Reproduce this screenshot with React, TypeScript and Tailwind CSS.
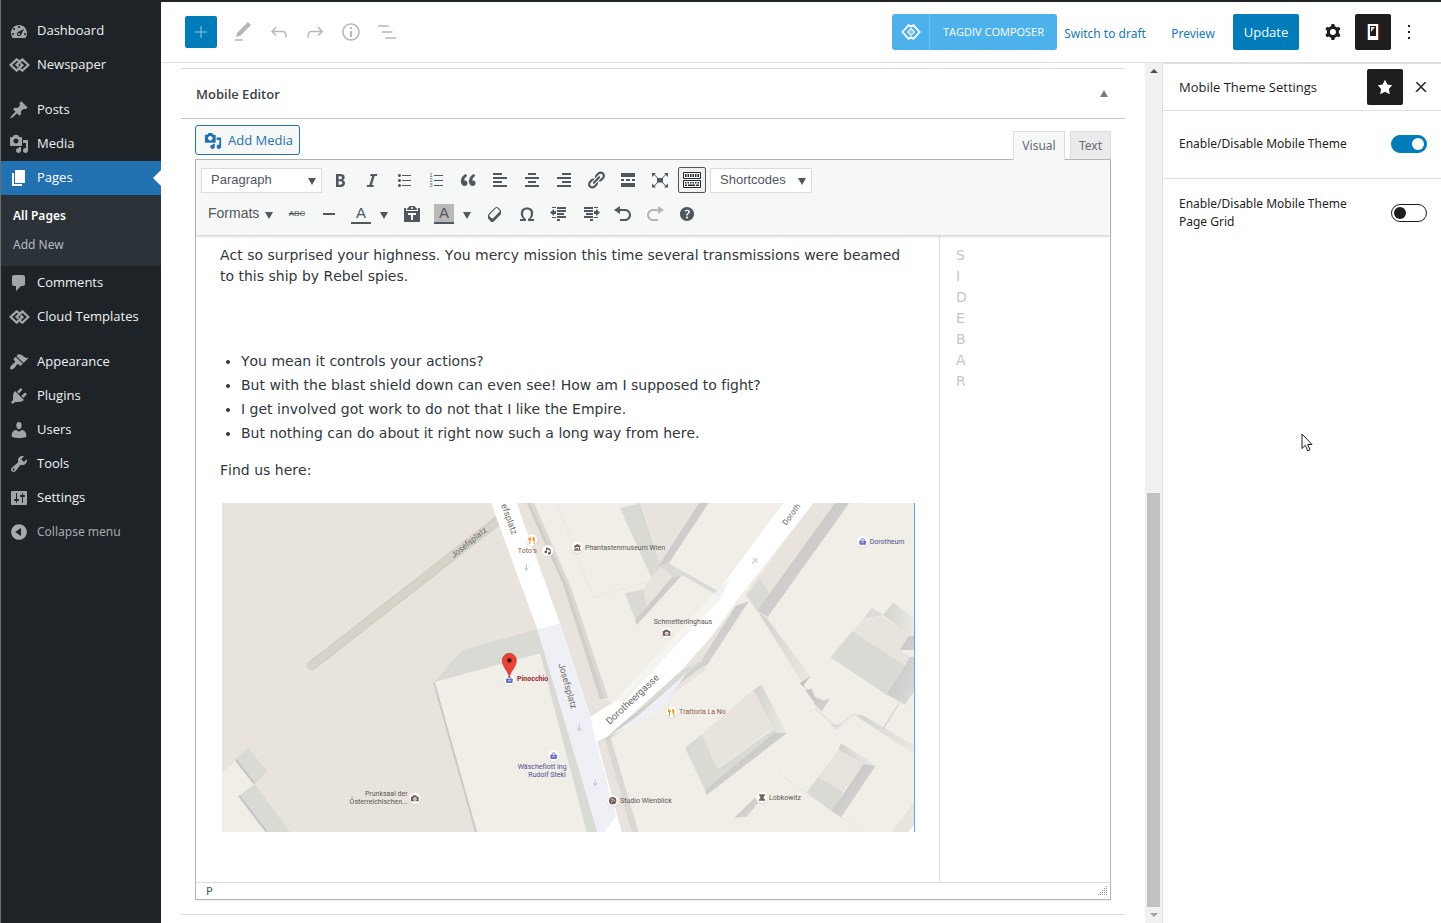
import React from 'react';

const paths = {
  dashboard: 'M3.76 17.01h12.48C17.34 15.63 18 13.9 18 12c0-4.41-3.58-8-8-8s-8 3.59-8 8c0 1.9.66 3.63 1.76 5.01zM9 6c0-.55.45-1 1-1s1 .45 1 1-.45 1-1 1-1-.45-1-1zM4 8c0-.55.45-1 1-1s1 .45 1 1-.45 1-1 1-1-.45-1-1zm4.52 3.4c.84-.83 6.51-3.5 6.51-3.5s-2.66 5.68-3.49 6.51c-.84.84-2.18.84-3.02 0-.83-.83-.83-2.18 0-3.01zM3 13c0-.55.45-1 1-1s1 .45 1 1-.45 1-1 1-1-.45-1-1zm6 0c0 .55.45 1 1 1s1-.45 1-1-.45-1-1-1-1 .45-1 1zm6 0c0-.55.45-1 1-1s1 .45 1 1-.45 1-1 1-1-.45-1-1z',
  post: 'M10.44 3.02l1.82-1.82 6.36 6.35-1.83 1.82c-1.05-.68-2.48-.57-3.41.36l-.75.75c-.92.93-1.04 2.35-.35 3.41l-1.83 1.82-2.41-2.41-2.8 2.79c-.42.42-3.38 2.71-3.8 2.29s1.86-3.39 2.28-3.81l2.79-2.79L4.1 9.36l1.83-1.82c1.05.69 2.48.57 3.4-.36l.75-.75c.93-.92 1.05-2.35.36-3.41z',
  media: 'M13 11V4c0-.55-.45-1-1-1h-1.67L9 1H5L3.67 3H2c-.55 0-1 .45-1 1v7c0 .55.45 1 1 1h10c.55 0 1-.45 1-1zM7 4.5c1.38 0 2.5 1.12 2.5 2.5S8.38 9.5 7 9.5 4.5 8.38 4.5 7 5.62 4.5 7 4.5zM14 6h5v10.5c0 1.38-1.12 2.5-2.5 2.5S14 17.88 14 16.5s1.12-2.5 2.5-2.5c.17 0 .34.02.5.05V9h-3V6zm-4 8.05V13h2v3.5c0 1.38-1.12 2.5-2.5 2.5S7 17.88 7 16.5 8.12 14 9.5 14c.17 0 .34.02.5.05z',
  page: 'M6 15V2h10v13H6zm-1 1h8v2H3V5h2v11z',
  comments: 'M5 2h9c1.1 0 2 .9 2 2v7c0 1.1-.9 2-2 2h-2l-5 5v-5H5c-1.1 0-2-.9-2-2V4c0-1.1.9-2 2-2z',
  appearance: 'M14.48 11.06L7.41 3.99l1.5-1.5c.5-.56 2.3-.47 3.51.32 1.21.8 1.43 1.28 2.91 2.1 1.18.64 2.45 1.26 4.45.85zm-.71.71L6.7 4.7 4.93 6.47c-.39.39-.39 1.02 0 1.41l1.06 1.06c.39.39.39 1.03 0 1.42-.6.6-1.43 1.11-2.21 1.69-.35.26-.7.53-1.01.84C1.43 14.23.4 16.08 1.4 17.07c.99 1 2.84-.03 4.18-1.36.31-.31.58-.66.85-1.02.57-.78 1.08-1.61 1.69-2.21.39-.39 1.02-.39 1.41 0l1.06 1.06c.39.39 1.02.39 1.41 0z',
  plugins: 'M13.11 4.36L9.87 7.6 8 5.73l3.24-3.24c.35-.34 1.05-.2 1.56.32.52.51.66 1.21.31 1.55zm-8 1.77l.91-1.12 9.01 9.01-1.19.84c-.71.71-2.63 1.16-3.82 1.16H6.14L4.9 17.26c-.59.59-1.54.59-2.12 0-.59-.58-.59-1.53 0-2.12l1.24-1.24v-3.88c0-1.13.4-3.19 1.09-3.89zm7.26 3.97l3.24-3.24c.34-.35 1.04-.21 1.55.31.52.51.66 1.21.31 1.55l-3.24 3.25z',
  users: 'M10 9.25c-2.27 0-2.73-3.44-2.73-3.44C7 4.02 7.82 2 9.97 2c2.16 0 2.98 2.02 2.71 3.81 0 0-.41 3.44-2.68 3.44zm0 2.57L12.72 10c2.39 0 4.52 2.33 4.52 4.53v2.49s-3.65 1.13-7.24 1.13c-3.65 0-7.24-1.13-7.24-1.13v-2.49c0-2.25 1.94-4.48 4.47-4.48z',
  tools: 'M16.68 9.77c-1.34 1.34-3.3 1.67-4.95.99l-5.41 6.52c-.99.99-2.59.99-3.58 0s-.99-2.59 0-3.57l6.52-5.42c-.68-1.65-.35-3.61.99-4.95 1.28-1.28 3.12-1.62 4.72-1.06l-2.89 2.89 2.82 2.82 2.86-2.87c.53 1.58.18 3.39-1.08 4.65zM3.81 16.21c.4.39 1.04.39 1.43 0 .4-.4.4-1.04 0-1.43-.39-.4-1.03-.4-1.43 0-.39.39-.39 1.03 0 1.43z',
  settings: 'M18 16V4c0-.55-.45-1-1-1H3c-.55 0-1 .45-1 1v12c0 .55.45 1 1 1h14c.55 0 1-.45 1-1zM8 11h1c.55 0 1 .45 1 1s-.45 1-1 1H8v1.5c0 .28-.22.5-.5.5s-.5-.22-.5-.5V13H6c-.55 0-1-.45-1-1s.45-1 1-1h1V5.5c0-.28.22-.5.5-.5s.5.22.5.5V11zm5-2h-1c-.55 0-1-.45-1-1s.45-1 1-1h1V5.5c0-.28.22-.5.5-.5s.5.22.5.5V7h1c.55 0 1 .45 1 1s-.45 1-1 1h-1v5.5c0 .28-.22.5-.5.5s-.5-.22-.5-.5V9z',
  collapse: 'M10 2.16c4.33 0 7.84 3.51 7.84 7.84s-3.51 7.84-7.84 7.84S2.16 14.33 2.16 10 5.71 2.16 10 2.16zm2 11.72V6.12L6.18 9.97z',
  star: 'M10 1l3 6 6 .75-4.12 4.62L16 19l-6-3-6 3 1.13-6.63L1 7.75 7 7z',
  bold: 'M6 4v13h4.54c1.37 0 2.46-.33 3.26-1 .8-.66 1.2-1.58 1.2-2.77 0-.84-.17-1.51-.51-2.01s-.9-.85-1.67-1.03v-.09c.57-.1 1.02-.4 1.36-.9s.51-1.13.51-1.91c0-1.14-.39-1.98-1.17-2.5C12.75 4.26 11.5 4 9.78 4H6zm2.57 5.15V6.26h1.36c.73 0 1.27.11 1.61.32.34.22.51.58.51 1.07 0 .54-.16.92-.47 1.15s-.82.35-1.51.35h-1.5zm0 2.19h1.6c1.44 0 2.16.53 2.16 1.61 0 .6-.17 1.05-.51 1.34s-.86.43-1.57.43H8.57v-3.38z',
  italic: 'M14.78 6h-2.13l-2.8 9h2.12l-.62 2H4.6l.62-2h2.14l2.8-9H8.03l.62-2h6.75z',
  ul: 'M5.5 7C4.67 7 4 6.33 4 5.5 4 4.68 4.67 4 5.5 4 6.32 4 7 4.68 7 5.5 7 6.33 6.32 7 5.5 7zM8 5h9v1H8V5zm-2.5 7c-.83 0-1.5-.67-1.5-1.5C4 9.68 4.67 9 5.5 9c.82 0 1.5.68 1.5 1.5 0 .83-.68 1.5-1.5 1.5zM8 10h9v1H8v-1zm-2.5 7c-.83 0-1.5-.67-1.5-1.5 0-.82.67-1.5 1.5-1.5.82 0 1.5.68 1.5 1.5 0 .83-.68 1.5-1.5 1.5zM8 15h9v1H8v-1z',
  quote: 'M9.49 13.22c0-.74-.2-1.38-.61-1.9-.62-.78-1.83-.88-2.53-.72-.29-1.65 1.11-3.75 2.92-4.65L7.88 4c-2.73 1.3-5.42 4.28-4.96 8.05C3.21 14.43 4.59 16 6.54 16c.85 0 1.56-.25 2.12-.75s.83-1.18.83-2.03zm8.05 0c0-.74-.2-1.38-.61-1.9-.63-.78-1.83-.88-2.53-.72-.29-1.65 1.11-3.75 2.92-4.65L15.93 4c-2.73 1.3-5.41 4.28-4.95 8.05.29 2.38 1.66 3.95 3.61 3.95.85 0 1.56-.25 2.12-.75s.83-1.18.83-2.03z',
  left: 'M12 5V3H3v2h9zm5 4V7H3v2h14zm-5 4v-2H3v2h9zm5 4v-2H3v2h14z',
  center: 'M14 5V3H6v2h8zm3 4V7H3v2h14zm-3 4v-2H6v2h8zm3 4v-2H3v2h14z',
  right: 'M17 5V3H8v2h9zm0 4V7H3v2h14zm0 4v-2H8v2h9zm0 4v-2H3v2h14z',
  link: 'M17.74 2.76c1.68 1.69 1.68 4.41 0 6.1l-1.53 1.52c-1.12 1.12-2.7 1.47-4.14 1.09l2.62-2.61.76-.77.76-.76c.84-.84.84-2.2 0-3.04-.84-.85-2.2-.85-3.04 0l-.77.76-3.38 3.38c-.37-1.44-.02-3.02 1.1-4.14l1.52-1.53c1.69-1.68 4.42-1.68 6.1 0zM8.59 13.43l5.34-5.34c.42-.42.42-1.1 0-1.52-.44-.43-1.13-.39-1.53 0l-5.33 5.34c-.42.42-.42 1.1 0 1.52.44.43 1.13.39 1.52 0zm-.76 2.29l4.14-4.15c.38 1.44.03 3.02-1.09 4.14l-1.52 1.53c-1.69 1.68-4.41 1.68-6.1 0-1.68-1.68-1.68-4.42 0-6.1l1.53-1.52c1.12-1.12 2.7-1.47 4.14-1.1l-4.14 4.15c-.85.84-.85 2.2 0 3.05.84.84 2.2.84 3.04 0z',
  more: 'M17 7V3H3v4h14zM6 11V9H3v2h3zm6 0V9H8v2h4zm5 0V9h-3v2h3zm0 6v-4H3v4h14z',
  hr: 'M4 9h12v2H4z',
  paste: 'M12.38 2L15 5v1H5V5l2.64-3h4.74zM10 5c.55 0 1-.44 1-1 0-.55-.45-1-1-1s-1 .45-1 1c0 .56.45 1 1 1zm5.45-1H17c.55 0 1 .45 1 1v12c0 .56-.45 1-1 1H3c-.55 0-1-.44-1-1V5c0-.55.45-1 1-1h1.55L4 4.63V7h12V4.63zM14 11V9H6v2h3v5h2v-5h3z',
  eraser: 'M14.29 4.59l1.1 1.11c.41.4.61.94.61 1.47v2.12c0 .53-.2 1.07-.61 1.47l-6.63 6.63c-.4.41-.94.61-1.47.61s-1.07-.2-1.47-.61l-1.11-1.1-1.1-1.11c-.41-.4-.61-.94-.61-1.47v-2.12c0-.54.2-1.07.61-1.48l6.63-6.62c.4-.41.94-.61 1.47-.61s1.06.2 1.47.61zm-6.21 9.7l6.42-6.42c.39-.39.39-1.03 0-1.43L12.36 4.3c-.19-.19-.45-.29-.72-.29s-.52.1-.71.29l-6.42 6.42c-.39.4-.39 1.04 0 1.43l2.14 2.14c.38.38 1.04.38 1.43 0z',
  omega: 'M10 5.4c1.27 0 2.24.36 2.91 1.08.66.71 1 1.76 1 3.13 0 1.28-.23 2.37-.69 3.27-.47.89-1.27 1.52-2.22 2.12v2h6v-2h-3.69c.92-.64 1.62-1.34 2.12-2.34.49-1.01.74-2.13.74-3.35 0-1.78-.55-3.19-1.65-4.22S11.92 3.54 10 3.54s-3.43.53-4.52 1.57c-1.1 1.04-1.65 2.44-1.65 4.2 0 1.21.24 2.31.73 3.33.48 1.01 1.19 1.71 2.1 2.36H3v2h6v-2c-.98-.64-1.8-1.28-2.24-2.17-.45-.89-.67-1.96-.67-3.22 0-1.37.33-2.41 1-3.13C7.75 5.76 8.72 5.4 10 5.4z',
  outdent: 'M7 4V3H3v1h4zm10 1V3H8v2h9zM7 7H5V5L1 8.5 5 12v-2h2V7zm10 1V6H8v2h9zm-2 3V9H8v2h7zm2 3v-2H8v2h9zM7 14v-1H3v1h4zm4 3v-2H8v2h3z',
  indent: 'M3 5V3h9v2H3zm10-1V3h4v1h-4zm0 3h2V5l4 3.5-4 3.5v-2h-2V7zM3 8V6h9v2H3zm2 3V9h7v2H5zm-2 3v-2h9v2H3zm10 0v-1h4v1h-4zm-4 3v-2h3v2H9z',
  undo: 'M12 5H7V2L1 6l6 4V7h5c2.2 0 4 1.8 4 4s-1.8 4-4 4H7v2h5c3.3 0 6-2.7 6-6s-2.7-6-6-6z',
  redo: 'M8 5h5V2l6 4-6 4V7H8c-2.2 0-4 1.8-4 4s1.8 4 4 4h5v2H8c-3.3 0-6-2.7-6-6s2.7-6 6-6z',
  help: 'M17 10c0-3.87-3.14-7-7-7-3.87 0-7 3.13-7 7s3.13 7 7 7c3.86 0 7-3.13 7-7zm-6.3 1.48H9.14v-.43c0-.38.08-.7.24-.98s.46-.57.88-.89c.41-.29.68-.53.81-.71.14-.18.2-.39.2-.62 0-.25-.09-.44-.28-.58-.19-.13-.45-.19-.79-.19-.58 0-1.25.19-2 .57l-.64-1.28c.87-.49 1.8-.74 2.77-.74.81 0 1.45.2 1.92.58.48.39.71.91.71 1.55 0 .43-.09.8-.29 1.11-.19.32-.57.67-1.11 1.06-.38.28-.61.49-.71.63-.1.15-.15.34-.15.57v.35zm-1.47 2.74c-.18-.17-.27-.42-.27-.73 0-.33.08-.58.26-.75s.43-.25.77-.25c.32 0 .57.09.75.26s.27.42.27.74c0 .3-.09.55-.27.72-.18.18-.43.27-.75.27-.33 0-.58-.09-.76-.26z',
};

type IconName = keyof typeof paths;

const Icon: React.FC<{ name: IconName; className?: string }> = ({ name, className = 'size-5' }) => (
  <svg viewBox="0 0 20 20" fill="currentColor" className={className} aria-hidden="true">
    <path d={paths[name]} />
  </svg>
);

const headerPaths = {
  edit: 'M20.1 5.1L16.9 2 6.2 12.7l-1.3 4.4 4.5-1.3L20.1 5.1zM4 20.8h8v-1.5H4v1.5z',
  undo: 'M18.3 11.7c-.6-.6-1.4-.9-2.3-.9H6.7l2.9-3.3-1.1-1-4.5 5L8.5 16l1-1-2.7-2.7H16c.5 0 .9.2 1.3.5 1 1 1 3.4 1 4.5v.3h1.5v-.2c0-1.5 0-4.3-1.5-5.7z',
  redo: 'M15.6 6.5l-1.1 1 2.9 3.3H8c-.9 0-1.7.3-2.3.9-1.4 1.5-1.4 4.2-1.4 5.6v.2h1.5v-.3c0-1.1 0-3.5 1-4.5.3-.3.7-.5 1.3-.5h9.2L14.5 15l1.1 1.1 4.6-4.6-4.6-5z',
  info: 'M12 3.2c-4.8 0-8.8 3.9-8.8 8.8 0 4.8 3.9 8.8 8.8 8.8 4.8 0 8.8-3.9 8.8-8.8 0-4.8-4-8.8-8.8-8.8zm0 16c-4 0-7.2-3.3-7.2-7.2C4.8 8 8 4.8 12 4.8s7.2 3.3 7.2 7.2c0 4-3.2 7.2-7.2 7.2zM11 17h2v-6h-2v6zm0-8h2V7h-2v2z',
  list: 'M13.8 5.2H3v1.5h10.8V5.2zm-3.6 12v1.5H21v-1.5H10.2zm7.2-6H6.6v1.5h10.8v-1.5z',
  plus: 'M18 11.2h-5.2V6h-1.6v5.2H6v1.6h5.2V18h1.6v-5.2H18z',
  cog: 'M10.289 4.836A1 1 0 0111.275 4h1.306a1 1 0 01.987.836l.244 1.466c.787.26 1.503.679 2.108 1.218l1.393-.522a1 1 0 011.216.437l.653 1.13a1 1 0 01-.23 1.273l-1.148.944a6.025 6.025 0 010 2.435l1.149.946a1 1 0 01.23 1.272l-.653 1.13a1 1 0 01-1.216.437l-1.394-.522c-.605.54-1.32.958-2.108 1.218l-.244 1.466a1 1 0 01-.987.836h-1.306a1 1 0 01-.986-.836l-.244-1.466a5.995 5.995 0 01-2.108-1.218l-1.394.522a1 1 0 01-1.217-.436l-.653-1.131a1 1 0 01.23-1.272l1.149-.946a6.026 6.026 0 010-2.435l-1.148-.944a1 1 0 01-.23-1.272l.653-1.131a1 1 0 011.217-.437l1.393.522a5.994 5.994 0 012.108-1.218l.244-1.466zM14.929 12a3 3 0 11-6 0 3 3 0 016 0z',
  dots: 'M13 19h-2v-2h2v2zm0-6h-2v-2h2v2zm0-6h-2V5h2v2z',
  close: 'M13 11.8l6.1-6.3-1-1-6.1 6.2-6.1-6.2-1 1 6.1 6.3-6.5 6.7 1 1 6.5-6.6 6.5 6.6 1-1z',
};

const HeaderIcon: React.FC<{ name: keyof typeof headerPaths; className?: string }> = ({ name, className = 'size-6' }) => (
  <svg viewBox="0 0 24 24" fill="currentColor" fillRule="evenodd" className={className} aria-hidden="true">
    <path d={headerPaths[name]} />
  </svg>
);

const TagdivLogo: React.FC = () => (
  <svg viewBox="0 0 21 14" className="h-[14px] w-[21px]" fill="none" stroke="currentColor" strokeWidth="2.3" aria-hidden="true">
    <path d="M10.8 3.6L7.6 1.4 1.6 7l6 5.6 5.8-5.4-1.9-1.8" />
    <path d="M10.2 10.4l3.2 2.2 6-5.6-6-5.6-5.8 5.4 1.9 1.8" />
  </svg>
);

type MenuEntry = { label: string; icon: IconName | 'tagdiv'; active?: boolean; gap?: boolean };

const menuTop: MenuEntry[] = [
  { label: 'Dashboard', icon: 'dashboard' },
  { label: 'Newspaper', icon: 'tagdiv' },
  { label: 'Posts', icon: 'post', gap: true },
  { label: 'Media', icon: 'media' },
  { label: 'Pages', icon: 'page', active: true },
];

const menuBottom: MenuEntry[] = [
  { label: 'Comments', icon: 'comments' },
  { label: 'Cloud Templates', icon: 'tagdiv' },
  { label: 'Appearance', icon: 'appearance', gap: true },
  { label: 'Plugins', icon: 'plugins' },
  { label: 'Users', icon: 'users' },
  { label: 'Tools', icon: 'tools' },
  { label: 'Settings', icon: 'settings' },
];

const MenuItem: React.FC<{ item: MenuEntry }> = ({ item }) => (
  <li className={item.gap ? 'mt-[11px]' : ''}>
    <a
      href="#"
      className={`relative flex h-[34px] items-center text-[13px] ${item.active ? 'bg-[#2271b1] text-white' : 'text-[#f0f0f1]'}`}
    >
      <span className={`flex w-9 justify-center ${item.active ? 'text-white' : 'text-[#a0a5aa]'}`}>
        {item.icon === 'tagdiv' ? <TagdivLogo /> : <Icon name={item.icon} className="size-5" />}
      </span>
      {item.label}
      {item.active && (
        <span className="absolute right-0 border-y-8 border-r-8 border-y-transparent border-r-white" />
      )}
    </a>
  </li>
);

const Sidebar: React.FC = () => (
  <nav className="w-[161px] shrink-0 border-l border-[#6b6e71] bg-[#1d2327] pt-[14px]">
    <ul>
      {menuTop.map((item) => (
        <MenuItem key={item.label} item={item} />
      ))}
    </ul>
    <ul className="bg-[#2c3338] py-[7px] text-xs font-['Noto_Sans',sans-serif]">
      <li>
        <a href="#" className="flex h-7 items-center pl-3 font-semibold text-white">All Pages</a>
      </li>
      <li>
        <a href="#" className="flex h-[29px] items-center pl-3 text-[#b4b9be]">Add New</a>
      </li>
    </ul>
    <ul>
      {menuBottom.map((item) => (
        <MenuItem key={item.label} item={item} />
      ))}
    </ul>
    <button type="button" className="flex h-[34px] items-center font-['Noto_Sans',sans-serif] text-xs text-[#a7aaad]">
      <span className="flex w-9 justify-center">
        <Icon name="collapse" />
      </span>
      Collapse menu
    </button>
  </nav>
);

const Header: React.FC = () => (
  <header className="flex h-[61px] shrink-0 items-center justify-between border-b border-[#e0e0e0] bg-white pr-[14px] pl-6">
    <div className="flex items-center text-[#b8b8b8]">
      <button type="button" aria-label="Add block" className="mr-2 flex size-8 items-center justify-center rounded-xs bg-[#007cba] text-[#66b0d6]">
        <HeaderIcon name="plus" />
      </button>
      {(['edit', 'undo', 'redo', 'info', 'list'] as const).map((name) => (
        <button key={name} type="button" aria-label={name} className="flex h-9 w-9 items-center justify-center">
          <HeaderIcon name={name} />
        </button>
      ))}
    </div>
    <div className="flex items-center font-['Noto_Sans',sans-serif] text-xs">
      <button type="button" className="flex h-9 items-center rounded-[3px] bg-[#4db2ec] text-white">
        <span className="flex h-full w-[38px] items-center justify-center border-r border-[#6dc1f0]">
          <svg viewBox="0 0 20 16" className="h-4 w-5" fill="none" stroke="currentColor" strokeWidth="1.8" aria-hidden="true">
            <path d="M1.400 8L7.600 1.200 10 2.600l2.400-1.400L18.600 8l-6.200 6.800-2.400-1.400-2.400 1.400z" />
            <path d="M10 4.800L13.200 8 10 11.200 6.800 8z" strokeWidth="1.3" />
            <circle cx="10" cy="8" r="0.700" fill="currentColor" stroke="none" />
          </svg>
        </span>
        <span className="w-[127px] text-center font-['Open_Sans',sans-serif] text-[11px]">TAGDIV COMPOSER</span>
      </button>
      <button type="button" className="h-9 w-24 pt-[3px] text-[#2079b4]">Switch to draft</button>
      <a href="#" className="w-20 pt-[3px] text-center text-[#2079b4]">Preview</a>
      <button type="button" className="h-9 w-[66px] rounded-xs bg-[#007cba] pt-[2px] font-['Open_Sans',sans-serif] text-[13px] text-white">Update</button>
      <button type="button" aria-label="Settings" className="ml-4 flex size-9 items-center justify-center text-[#1e1e1e]">
        <HeaderIcon name="cog" />
      </button>
      <button type="button" aria-label="Mobile theme" className="ml-1 flex size-9 items-center justify-center rounded-xs bg-[#1e1e1e]">
        <svg viewBox="0 0 12 16" className="h-4 w-3" aria-hidden="true">
          <rect width="12" height="16" fill="#fff" />
          <rect width="1" height="16" fill="#3558c8" />
          <rect x="11" width="1" height="16" fill="#d0312d" />
          <path d="M3 2h6v10H3z" fill="#1e1e1e" />
          <path d="M4 3h4L4 8z" fill="#e7e1ea" />
        </svg>
      </button>
      <button type="button" aria-label="Options" className="flex h-9 w-9 items-center justify-center text-[#1e1e1e]">
        <HeaderIcon name="dots" />
      </button>
    </div>
  </header>
);

const Caret: React.FC<{ className?: string }> = ({ className = '' }) => (
  <span className={`mt-[2px] border-x-4 border-t-[7px] border-x-transparent border-t-[#50575e] ${className}`} />
);

const ToolButton: React.FC<{ label: string; className?: string; children: React.ReactNode }> = ({ label, className = '', children }) => (
  <button type="button" aria-label={label} className={`flex h-[26px] w-7 items-center justify-center ${className}`}>
    {children}
  </button>
);

const ToolSelect: React.FC<{ value: string; className: string }> = ({ value, className }) => (
  <span className="relative flex items-center">
    <select aria-label={value} className={`h-[25px] appearance-none ${className}`} defaultValue={value}>
      <option>{value}</option>
    </select>
    <Caret className="pointer-events-none absolute right-[6px]" />
  </span>
);

const keyDots = [3, 5.5, 8, 10.5, 13, 15.5];

const Toolbar: React.FC = () => (
  <div className="relative border-b border-[#dcdcde] bg-[#f6f7f7] px-[5px] pt-[3px] pb-1 font-['Liberation_Sans',sans-serif] text-[#50575e] shadow-[0_1px_2px_rgba(0,0,0,0.15)]">
    <div className="flex h-[34px] items-center gap-1">
      <ToolSelect value="Paragraph" className="w-[121px] border border-[#dcdcde] bg-white pl-[9px] text-[13px]" />
      {(['bold', 'italic', 'ul'] as const).map((name) => (
        <ToolButton key={name} label={name}>
          <Icon name={name} />
        </ToolButton>
      ))}
      <ToolButton label="Numbered list">
        <svg viewBox="0 0 20 20" className="size-5" fill="currentColor" aria-hidden="true">
          <path d="M8 5h9v1H8zM8 10h9v1H8zM8 15h9v1H8z" />
          <g fontFamily="Liberation Sans" fontSize="5.5">
            <text x="3.5" y="7">1</text>
            <text x="3.5" y="12.2">2</text>
            <text x="3.5" y="17.4">3</text>
          </g>
        </svg>
      </ToolButton>
      {(['quote', 'left', 'center', 'right', 'link', 'more'] as const).map((name) => (
        <ToolButton key={name} label={name}>
          <Icon name={name} />
        </ToolButton>
      ))}
      <ToolButton label="Fullscreen">
        <svg viewBox="0 0 20 20" className="size-5" fill="currentColor" aria-hidden="true">
          <path d="M7 8h6v4.5H7z" />
          <path d="M3.5 4l13 12.5M16.5 4l-13 12.5" stroke="currentColor" strokeWidth="1" />
          <path d="M2 3h4L2 7zM18 3h-4l4 4zM2 17.500v-4l4 4zM18 17.500v-4l-4 4z" />
        </svg>
      </ToolButton>
      <ToolButton label="Toolbar toggle" className="rounded-xs border border-[#50575e] bg-[#f0f0f1] text-[#23282d]">
        <svg viewBox="0 0 20 18" className="h-[18px] w-5 shrink-0" aria-hidden="true">
          <path d="M1.500 1.500h17v6h-17zM1.500 9.500h17v7h-17z" fill="#fff" stroke="currentColor" />
          {keyDots.map((x) => (
            <g key={x} fill="currentColor">
              <rect x={x} y="3" width="1.5" height="3" />
              <rect x={x} y="11" width="1.5" height="1.500" />
            </g>
          ))}
          <path d="M3 13.500h2v1.500H3zM6 13.500h7v1.500H6zM14 13.500h3v1.500h-3z" fill="currentColor" />
        </svg>
      </ToolButton>
      <ToolSelect value="Shortcodes" className="w-[102px] border border-[#dcdcde] bg-white pl-[9px] text-[13px]" />
    </div>
    <div className="flex h-[34px] items-center gap-1">
      <ToolSelect value="Formats" className="w-[78px] bg-transparent pb-[3px] pl-[7px] text-sm" />
      <ToolButton label="Strikethrough">
        <span className="text-[8px] line-through">ABC</span>
      </ToolButton>
      <ToolButton label="Horizontal line">
        <Icon name="hr" />
      </ToolButton>
      <div className="flex w-[47px] items-center">
        <ToolButton label="Text color">
          <span className="w-5 border-b-2 border-current text-center text-[15px] leading-[18px]">A</span>
        </ToolButton>
        <Caret className="ml-[5px]" />
      </div>
      <ToolButton label="Paste as text">
        <Icon name="paste" />
      </ToolButton>
      <div className="flex w-[47px] items-center">
        <ToolButton label="Background color">
          <span className="w-5 border-b-2 border-current bg-[#b9b9b9] text-center text-[15px] leading-[18px]">A</span>
        </ToolButton>
        <Caret className="ml-[5px]" />
      </div>
      {(['eraser', 'omega', 'outdent', 'indent', 'undo', 'redo', 'help'] as const).map((name) => (
        <ToolButton key={name} label={name} className={name === 'redo' ? 'text-[#b4b7ba]' : ''}>
          <Icon name={name} />
        </ToolButton>
      ))}
    </div>
  </div>
);

const Poi: React.FC<{ x: number; y: number; color: string; kind: 'bag' | 'fork' | 'camera' | 'note' | 'museum' | 'tower' | 'art' }> = ({ x, y, color, kind }) => (
  <g transform={`translate(${x} ${y})`} fill={color}>
    <circle r="18" cy="2" fill="#cfccc6" opacity="0.6" />
    <circle r="17" fill="#fff" />
    {kind === 'bag' && (
      <>
        <path d="M-11-2h22L9 10H-9z" />
        <path d="M-5-2c0-9 10-9 10 0" fill="none" stroke={color} strokeWidth="3" />
        <path d="M-4 3h8" stroke="#fff" strokeWidth="2" />
      </>
    )}
    {kind === 'fork' && <path d="M-9-10h2v6h2v-6h2v6h2v4h-3v12h-3V0h-3zM3-10c4 0 6 4 6 8v14H6V2H3z" />}
    {kind === 'camera' && (
      <>
        <path d="M-12-5h4l2-4H4l2 4h5V9h-23z" />
        <circle r="5" cy="2" fill="#fff" />
        <circle r="2" cy="2" />
      </>
    )}
    {kind === 'note' && (
      <>
        <path d="M-5-10L9-5v13H6V-1l-8-3v8h-3z" />
        <circle cx="-6" cy="4" r="4" />
        <circle cx="5" cy="8" r="4" />
      </>
    )}
    {kind === 'museum' && <path d="M-10-4L0-10 10-4v3h-2v8h2v3h-20V7h2v-8h-2zM-5-1v8h2v-5h6v5h2v-8z" />}
    {kind === 'tower' && <path d="M-9-9h18v4H6L5 4l4 2v4H-9V6l4-2-1-9h-3z" />}
    {kind === 'art' && (
      <>
        <circle r="11" />
        <path d="M-6-3c5-5 10 0 12 5M-5 5l6-5" fill="none" stroke="#fff" strokeWidth="2" />
      </>
    )}
  </g>
);

const MapPicture: React.FC = () => (
  <svg viewBox="21 24 2076 987" className="block h-auto w-full" role="img" aria-label="Map" fontFamily="Roboto, sans-serif">
    <defs>
      <linearGradient id="shade" x1="0" y1="0" x2="1" y2="1">
        <stop offset="0" stopColor="#c2c0c0" />
        <stop offset="1" stopColor="#dddbd8" />
      </linearGradient>
      <linearGradient id="soft" x1="0" y1="0" x2="1" y2="0">
        <stop offset="0" stopColor="#d3d3ce" />
        <stop offset="1" stopColor="#eae8e2" />
      </linearGradient>
    </defs>
    <rect x="21" y="24" width="2076" height="987" fill="#e8e4dd" />
    <path d="M291 511L860 68" stroke="#c9c7b9" strokeWidth="28" strokeLinecap="round" />
    <path d="M291 511L860 68" stroke="#d6d4c8" strokeWidth="24" strokeLinecap="round" />
    <path d="M21 830l79-73 56 71-36 40 105 143H21z" fill="#dadad5" />
    <path d="M21 830l42-35 55 73-46 34 83 109H21z" fill="#f1eee8" />
    <path d="M63 795l55 71M72 902l83 109" stroke="#c3c4c5" strokeWidth="6" />
    <path d="M657 562l85-97 225-62 183 608h-40z" fill="#dadad5" />
    <path d="M657 562l318-87 140 536H783z" fill="#f1eee8" />
    <path d="M657 562l126 449" stroke="#c9cac9" strokeWidth="6" />

    {/* building blocks east of the main street */}
    <path d="M935 24h1162v987H1250l-79-276 40-110-56-13-110-342z" fill="#f1eee8" />
    <path d="M935 24h22l108 246 115 340-25 2-110-342z" fill="#d9d8d3" />
    <path d="M935 24h10l110 246 112 341-12 1-110-342z" fill="#cfcecb" />
    <path d="M1171 735l16-6 84 282h-21z" fill="#d9d8d3" />
    <path d="M1026 24l110 285 180-55" fill="none" stroke="#e8e7e3" strokeWidth="3" />

    {/* courtyards at the top */}
    <path d="M1215 40l60-16 63 191-28 35z" fill="#dadad5" />
    <path d="M1275 24h180l-117 186z" fill="#e8e4dd" />
    <path d="M1453 24h28l-131 198-20-10z" fill="url(#shade)" />
    <path d="M1285 283l50-68 62 27-107 120z" fill="#e8e4dd" />
    <path d="M1230 295l55-13 13 63-33 40z" fill="#dadad5" />
    <path d="M1265 390l-4-15 112-130 28-5z" fill="url(#shade)" />
    <path d="M1335 210l25-6 160 90-10 8-110-62-25 8z" fill="#dbdad6" />

    {/* streets */}
    <path d="M1795 24h70l-240 325-35-50z" fill="#e8e4dd" />
    <path d="M1595 300l40-50 28 46-36 52z" fill="#dadad5" />
    <path d="M1860 24h43l-245 342-32-18z" fill="url(#shade)" />
    <path d="M1485 430l85-100-100 195-280 205-10-15z" fill="#e8e4dd" />
    <path d="M1562 332l40-14-122 187-30 18-275 214-10-8 290-225z" fill="url(#shade)" />
    <path d="M1395 530l85-45-25 22-195 145z" fill="#dadad5" />
    <path d="M828 24h77l130 361 92 280 93 346h-60L967 403z" fill="#fff" />
    <path d="M967 403l68-18 92 280 16 75 60 225-35 46h-21z" fill="#eff0f5" />
    <path d="M1127 665l78-50 20 7 205-222 70-100L1705 24h90l-225 286-85 120-90 100-220 197-32 13z" fill="#fff" />
    <path d="M1265 665l150-132-80 115-156 78z" fill="#eff0f5" />
    <path d="M1495 298l50-48-30 62z" fill="#eff0f5" />
    <path d="M1495 298l21 14-300 313-8-18z" fill="#f5f4ef" />

    {/* steps along the middle block */}
    <path d="M1630 352l25 16 133 177-26 20z" fill="url(#soft)" />
    <path d="M1754 565l34-22-22 27 8 14zM1795 625l50-14-25 38zM1845 690l35-3-14 16zM1770 585l20-4 10 25 25 10-24 10z" fill="url(#shade)" />
    <path d="M1800 640l66 58 46-38h28" fill="none" stroke="#e2e0db" strokeWidth="5" />
    <path d="M1925 664l15-5 157 91v28z" fill="url(#soft)" />
    <path d="M2052 625l-47 75" stroke="#d5d5d2" strokeWidth="4" />
    <path d="M1690 835l250 176" stroke="#e7e5df" strokeWidth="3" />

    {/* right hand building */}
    <path d="M1847 487l65-79 156 102-53 90z" fill="#dadad5" />
    <path d="M1912 408l33-36 55-10 80 58-25 45 30 20-17 25z" fill="#e8e4dd" />
    <path d="M1945 372l25-34 35 22z" fill="#dcdbd6" />
    <path d="M2005 360l30-38 62 48v50h-17z" fill="url(#soft)" />
    <path d="M2080 422h17v43h-42zM2085 485h12v105l-27 40-55-32z" fill="url(#shade)" />

    {/* central courtyard */}
    <path d="M1410 758l50-40 50 102 170-120 5 15-215 170z" fill="#dadad5" />
    <path d="M1460 718l155-133 60 115-170 120z" fill="#e8e4dd" />
    <path d="M1615 585l25-17 75 147-35-5z" fill="url(#soft)" />
    <path d="M1470 885l210-173 35 3-240 185z" fill="url(#shade)" />

    <path d="M1775 892l35-47 75 45-33 60z" fill="#dadad5" />
    <path d="M1870 765l75 45-60 80-75-45z" fill="#e8e4dd" />
    <path d="M1870 765l8-20 102 65-35-2z" fill="url(#soft)" />
    <path d="M1945 808l37 4-104 155-28-19z" fill="url(#shade)" />
    <path d="M1558 968l62-60 8 17-33 40z" fill="url(#shade)" />
    <path d="M2030 1011l67-91v91z" fill="#e8e4dd" />
    <path d="M2080 1011l17-21v21z" fill="#fff" />

    <g fill="none" stroke="#bfc3e0" strokeWidth="3">
      <path d="M934 206v20m-6-8l6 8 6-8M1093 688v20m-6-8l6 8 6-8M1141 852v20m-6-8l6 8 6-8M1611 207l12-14m-10-2l11 1-1 11" />
    </g>

    <g fontSize="25" fill="#6f6b66">
      <text transform="translate(716 190) rotate(-39)">Josefsplatz</text>
      <text transform="translate(858 30) rotate(70)" fontSize="27">efsplatz</text>
      <text transform="translate(1030 508) rotate(74)" fontSize="27">Josefsplatz</text>
      <text transform="translate(1184 690) rotate(-43)" fontSize="29">Dorotheergasse</text>
      <text transform="translate(1714 92) rotate(-54)" fontSize="24">Doroth</text>
    </g>
    <g fontSize="21" fill="#5b5552">
      <text x="908" y="175" fill="#8d5a4b">Toto's</text>
      <text x="1110" y="164">Phantastenmuseum Wien</text>
      <text x="1316" y="387">Schmetterlinghaus</text>
      <text x="1964" y="146" fill="#4c4f93">Dorotheum</text>
      <text x="906" y="559" fill="#9c2a2e" fontWeight="700">Pinocchio</text>
      <text x="908" y="821" fill="#4c4f93">Wäscheflott Ing</text>
      <text x="940" y="845" fill="#4c4f93">Rudolf Stekl</text>
      <text x="578" y="902" textAnchor="end">Prunksaal der</text>
      <text x="578" y="927" textAnchor="end">Österreichischen...</text>
      <text x="1392" y="658" fill="#8d5a4b">Trattoria La No</text>
      <text x="1215" y="923">Studio Wienblick</text>
      <text x="1662" y="914">Lobkowitz</text>
    </g>

    <Poi x={950} y={135} color="#f08c1a" kind="fork" />
    <Poi x={998} y={167} color="#7b5d55" kind="note" />
    <Poi x={1087} y={157} color="#7b5d55" kind="museum" />
    <Poi x={1943} y={139} color="#6a70c8" kind="bag" />
    <Poi x={1355} y={413} color="#7b5d55" kind="camera" />
    <Poi x={883} y={554} color="#6a70c8" kind="bag" />
    <Poi x={1016} y={782} color="#6a70c8" kind="bag" />
    <Poi x={600} y={910} color="#7b5d55" kind="camera" />
    <Poi x={1369} y={651} color="#f08c1a" kind="fork" />
    <Poi x={1193} y={917} color="#7b5d55" kind="art" />
    <Poi x={1641} y={907} color="#7b5d55" kind="tower" />

    <path d="M883 548c-3-22-21-30-21-52a21 21 0 0 1 42 0c0 22-18 30-21 52z" fill="#ea4335" stroke="#b3342b" strokeWidth="2" />
    <circle cx="883" cy="496" r="7" fill="#4d1411" />
  </svg>
);

const EditorBody: React.FC = () => (
  <div className="flex font-['DejaVu_Sans',sans-serif] text-sm leading-[21px] text-[#32373c] [font-kerning:none] [font-variant-ligatures:none]">
    <div className="flex-1 border-r border-[#e0e0e0] pt-[9px] pr-6 pb-[50px] pl-6">
      <p>
        Act so surprised your highness. You mercy mission this time several transmissions were beamed to this ship by
        Rebel spies.
      </p>
      <ul className="mt-[62px] list-disc pl-[21px] leading-6">
        <li>You mean it controls your actions?</li>
        <li>But with the blast shield down can even see! How am I supposed to fight?</li>
        <li>I get involved got work to do not that I like the Empire.</li>
        <li>But nothing can do about it right now such a long way from here.</li>
      </ul>
      <p className="mt-[15px]">Find us here:</p>
      <div className="mt-[22px] ml-[2px] border-r border-r-[#4db2ec]">
        <MapPicture />
      </div>
    </div>
    <ul className="w-[170px] pt-[9px] pl-4 text-[#c6c6c6]">
      {['S', 'I', 'D', 'E', 'B', 'A', 'R'].map((letter) => (
        <li key={letter}>{letter}</li>
      ))}
    </ul>
  </div>
);

const resizeDots = [1, 2, 3, 4, 5];

const MobileEditor: React.FC = () => (
  <section className="mt-[5px] border-y border-[#dcdcde]">
    <div className="flex h-[50px] items-center justify-between border-b border-[#c3c4c7] px-[15px]">
      <h2 className="pt-[2px] text-[13px] font-semibold text-[#3c434a]">Mobile Editor</h2>
      <button type="button" aria-label="Toggle panel" className="px-[2px]">
        <span className="block border-x-4 border-b-[7px] border-x-transparent border-b-[#787c82]" />
      </button>
    </div>
    <div className="px-[14px] pt-[6px] pb-[14px]">
      <div className="flex items-start justify-between">
        <button
          type="button"
          className="mb-1 flex h-[30px] w-[105px] items-center gap-[6px] rounded-[3px] border border-[#2271b1] bg-[#f6f7f7] pt-[2px] pl-2 text-[13px] text-[#2271b1]"
        >
          <Icon name="media" className="size-[18px]" />
          Add Media
        </button>
        <div className="relative z-10 mt-[6px] flex gap-[5px] font-['Noto_Sans',sans-serif] text-xs text-[#646970]">
          <button type="button" className="h-[29px] w-[52px] border border-b-0 border-[#dcdcde] bg-[#f6f7f7]">Visual</button>
          <button type="button" className="h-7 w-[41px] border border-b-0 border-[#dcdcde] bg-[#ebebeb]">Text</button>
        </div>
      </div>
      <div className="-mt-px border border-[#b4b7ba] shadow-[0_1px_1px_rgba(0,0,0,0.06)]">
        <Toolbar />
        <EditorBody />
        <div className="flex h-[17px] items-center justify-between border-t border-[#dcdcde] pr-[2px] pl-[10px] font-['DejaVu_Sans',sans-serif] text-[11px] text-[#50575e]">
          <span className="pt-[2px]">P</span>
          <svg viewBox="0 0 10 10" className="size-[10px]" fill="#8c8f94" aria-hidden="true">
            {resizeDots.map((row) =>
              resizeDots.slice(0, row).map((col) => (
                <rect key={`${row}-${col}`} x={10 - col * 2} y={row * 2 - 2} width="1" height="1" />
              )),
            )}
          </svg>
        </div>
      </div>
    </div>
  </section>
);

const Toggle: React.FC<{ id: string; label: string; on?: boolean }> = ({ id, label, on }) => (
  <div className="flex items-center justify-between gap-8 pr-[14px] pl-4">
    <label htmlFor={id} className="max-w-[180px] font-['Noto_Sans',sans-serif] text-xs leading-[18px]">{label}</label>
    <input
      id={id}
      type="checkbox"
      role="switch"
      defaultChecked={on}
      className="relative h-[18px] w-9 shrink-0 appearance-none rounded-full border border-[#1e1e1e] bg-white before:absolute before:top-[2px] before:left-[2px] before:size-3 before:rounded-full before:bg-[#1e1e1e] checked:border-[#007cba] checked:bg-[#007cba] checked:before:left-5 checked:before:bg-white"
    />
  </div>
);

const SettingsPanel: React.FC = () => (
  <aside className="w-[279px] shrink-0 border-t border-l border-[#e0e0e0] bg-white text-[#1e1e1e]">
    <div className="flex h-[47px] items-center border-b border-[#e0e0e0] pr-[6px] pl-4">
      <h2 className="flex-1 pt-[2px] text-[13px] font-medium">Mobile Theme Settings</h2>
      <button type="button" aria-label="Pin" className="flex size-9 items-center justify-center rounded-xs bg-[#1e1e1e] text-white">
        <Icon name="star" className="size-4" />
      </button>
      <button type="button" aria-label="Close" className="ml-1 flex size-7 items-center justify-center">
        <HeaderIcon name="close" className="size-4 stroke-current" />
      </button>
    </div>
    <div className="flex h-[68px] flex-col justify-center border-b border-[#e0e0e0] pb-[2px]">
      <Toggle id="mobile-theme" label="Enable/Disable Mobile Theme" on />
    </div>
    <div className="pt-4">
      <Toggle id="mobile-grid" label="Enable/Disable Mobile Theme Page Grid" />
    </div>
  </aside>
);

const Scrollbar: React.FC = () => (
  <div className="flex w-[17px] shrink-0 flex-col items-center bg-[#f1f1f1] py-[6px]" aria-hidden="true">
    <span className="border-x-4 border-b-4 border-x-transparent border-b-[#505050]" />
    <span className="flex-1" />
    <span className="mb-[6px] h-[414px] w-[13px] bg-[#c1c1c1]" />
    <span className="border-x-4 border-t-4 border-x-transparent border-t-[#a3a3a3]" />
  </div>
);

const Pointer: React.FC = () => (
  <svg viewBox="0 0 12 19" className="pointer-events-none absolute top-[433px] right-[128px] h-[19px] w-3" aria-hidden="true">
    <path d="M1 1v14.500l3.300-3.200 2.400 5.500 2.300-1-2.400-5.300H11z" fill="#fff" stroke="#1e1e1e" />
  </svg>
);

const App: React.FC = () => {
  return (
    <div className="relative flex h-screen overflow-hidden bg-white font-['Open_Sans','Noto_Sans',sans-serif]">
      <Sidebar />
      <div className="flex min-w-0 flex-1 flex-col border-t-2 border-[#1d2327]">
        <Header />
        <div className="flex min-h-0 flex-1">
          <main className="min-w-0 flex-1 overflow-hidden px-5">
            <MobileEditor />
          </main>
          <Scrollbar />
          <SettingsPanel />
        </div>
      </div>
      <Pointer />
    </div>
  );
};

export default App;
